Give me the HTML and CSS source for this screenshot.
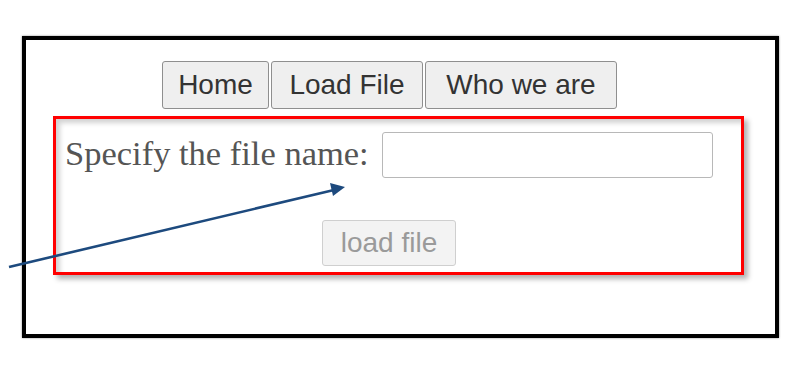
FILE: index.html
```html
<!DOCTYPE html>
<html>
<head>
<meta charset="utf-8">
<link rel="stylesheet" href="styles.css">
</head>
<body>
<div class="page">
  <div class="frame">
    <nav class="nav">
      <button class="nav-btn btn-home">Home</button>
      <button class="nav-btn btn-load">Load File</button>
      <button class="nav-btn btn-who">Who we are</button>
    </nav>
    <div class="panel">
      <div class="row">
        <label class="label" for="fname">Specify the file name:</label>
        <input class="field" id="fname" type="text">
      </div>
      <div class="actions">
        <button class="load-btn" disabled>load file</button>
      </div>
    </div>
  </div>
  <svg class="arrow" width="800" height="373" viewBox="0 0 800 373">
    <line x1="9" y1="267" x2="334" y2="190" stroke="#1d4a7e" stroke-width="2.6"/>
    <polygon points="345,187 330,183 333,196" fill="#1d4a7e"/>
  </svg>
</div>
</body>
</html>
```

FILE: styles.css
```css
html, body {
  margin: 0;
  padding: 0;
  background: #ffffff;
}
.page {
  position: relative;
  width: 800px;
  height: 373px;
  overflow: hidden;
  padding-top: 36px;
  box-sizing: border-box;
}
.frame {
  margin-left: 22px;
  width: 757px;
  height: 302px;
  box-sizing: border-box;
  border: 4px solid #000;
  box-shadow: 0 0 2px rgba(0,0,0,0.45);
  padding-top: 21px;
}
.nav {
  display: flex;
  gap: 2px;
  margin-left: 136px;
}
.nav-btn {
  font-family: "Liberation Sans", Arial, sans-serif;
  font-size: 28px;
  line-height: 32px;
  height: 48px;
  padding: 0;
  color: #333;
  background: #efefef;
  border: 1px solid #8f8f8f;
  border-radius: 3px;
  text-align: center;
}
.btn-home { width: 107px; }
.btn-load { width: 152px; }
.btn-who { width: 192px; }
.panel {
  margin-top: 7px;
  margin-left: 27px;
  width: 691px;
  height: 159px;
  box-sizing: border-box;
  border: 3px solid #ff0000;
  box-shadow: 4px 4px 5px rgba(0,0,0,0.3), inset 4px 4px 5px rgba(0,0,0,0.18);
  padding: 13px 0 0 9px;
}
.row {
  display: flex;
  align-items: center;
  gap: 13px;
}
.label {
  font-family: "Liberation Serif", "Times New Roman", serif;
  font-size: 34.5px;
  line-height: 40px;
  color: #555;
  position: relative;
  top: -2px;
}
.field {
  width: 331px;
  height: 46px;
  box-sizing: border-box;
  border: 1px solid #b8b8b8;
  border-radius: 3px;
  margin: 0;
  padding: 0 6px;
  font-size: 24px;
}
.actions {
  margin-top: 42px;
  margin-left: 257px;
}
.load-btn {
  font-family: "Liberation Sans", Arial, sans-serif;
  font-size: 28px;
  line-height: 32px;
  width: 134px;
  height: 46px;
  padding: 0;
  color: #9a9a9a;
  background: #f3f3f3;
  border: 1px solid #cfcfcf;
  border-radius: 3px;
  text-align: center;
}
.arrow {
  position: absolute;
  left: 0;
  top: 0;
  pointer-events: none;
}
```
